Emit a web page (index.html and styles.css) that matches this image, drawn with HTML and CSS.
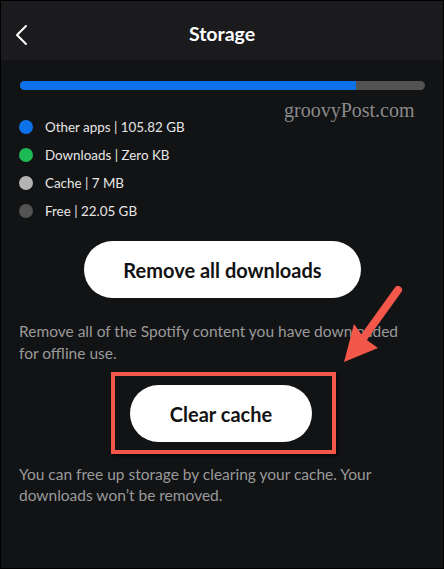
FILE: index.html
```html
<!DOCTYPE html>
<html>

<head>
    <meta charset="UTF-8">
    <meta name="viewport" content="width=device-width, initial-scale=1.0" />
    <title>Storage</title>
    <link rel="stylesheet" href="styles.css">
</head>

<body>
    <div class="screen">
        <header class="topbar">
            <svg class="back" width="14" height="22" viewBox="0 0 14 22">
                <polyline points="11,2 2,11 11,20" fill="none" stroke="#fff" stroke-width="2" stroke-linecap="round" stroke-linejoin="round" />
            </svg>
            <h1>Storage</h1>
        </header>

        <main class="content">
            <div class="bar">
                <div class="bar-used" style="width: 83%"></div>
            </div>

            <div class="watermark">groovyPost.com</div>

            <ul class="legend">
                <li><span class="dot blue"></span>Other apps | 105.82 GB</li>
                <li><span class="dot green"></span>Downloads | Zero KB</li>
                <li><span class="dot light"></span>Cache | 7 MB</li>
                <li><span class="dot dark"></span>Free | 22.05 GB</li>
            </ul>

            <button class="pill wide">Remove all downloads</button>
            <p class="note first">Remove all of the Spotify content you have downloaded for offline use.</p>

            <div class="highlight">
                <button class="pill">Clear cache</button>
            </div>
            <p class="note second">You can free up storage by clearing your cache. Your downloads won’t be removed.</p>

            <svg class="arrow" width="80" height="100" viewBox="0 0 80 100">
                <line x1="64" y1="8" x2="28" y2="58" stroke="#f2574a" stroke-width="8" stroke-linecap="round" />
                <polygon points="10,80 20,42 30,56 44,66" fill="#f2574a" />
            </svg>
        </main>
    </div>
</body>

</html>
```

FILE: styles.css
```css
* {
    box-sizing: border-box;
}

body {
    margin: 0;
    background: #000;
    font-family: Lato, "Open Sans", sans-serif;
}

.screen {
    width: 444px;
    height: 569px;
    border: 1px solid #000;
    background-color: #121315;
    overflow: hidden;
}

.topbar {
    height: 59px;
    background-color: #1b1b1d;
    display: flex;
    align-items: center;
    justify-content: center;
    position: relative;
}

.topbar h1 {
    margin: 0;
    margin-top: 6px;
    color: #fff;
    font-size: 19.5px;
    font-weight: 700;
}

.back {
    position: absolute;
    left: 14px;
    top: 23px;
}

.content {
    position: relative;
    padding: 0 20px 0 17px;
    display: flex;
    flex-direction: column;
}

.bar {
    margin: 21px -2px 0 2px;
    height: 9px;
    border-radius: 5px;
    background-color: #535353;
    overflow: hidden;
}

.bar-used {
    height: 100%;
    background-color: #0d72ea;
}

.watermark {
    position: absolute;
    left: 283px;
    top: 39px;
    color: #8a8a8a;
    font-family: "Liberation Serif", serif;
    font-size: 20px;
}

.legend {
    list-style-type: none;
    margin: 23px 0 0 0;
    padding: 0;
}

.legend li {
    height: 28px;
    display: flex;
    align-items: center;
    color: #e6e6e6;
    font-size: 13.4px;
}

.dot {
    width: 14px;
    height: 14px;
    border-radius: 50%;
    margin-right: 12px;
    margin-left: 1px;
}

.dot.blue {
    background-color: #0d72ea;
}

.dot.green {
    background-color: #1db954;
}

.dot.light {
    background-color: #b3b3b3;
}

.dot.dark {
    background-color: #535353;
}

.pill {
    align-self: center;
    height: 57px;
    border: none;
    border-radius: 29px;
    background: #fff;
    color: #121212;
    font-family: inherit;
    font-size: 20px;
    font-weight: 700;
    width: 182px;
}

.pill.wide {
    margin-top: 16px;
    width: 277px;
    margin-left: 4px;
}

.note {
    margin: 0 14px 0 0;
    color: #9a9a9a;
    font-size: 15.5px;
    line-height: 22px;
    padding-left: 1px;
}

.note.first {
    margin-top: 22px;
}

.note.second {
    margin-top: 10px;
    line-height: 21px;
}

.highlight {
    align-self: center;
    margin-top: 8px;
    margin-left: 6px;
    border: 4px solid #f2574a;
    padding: 9px 20px 8px 15px;
    box-shadow: 2px 2px 3px rgba(0, 0, 0, .6);
}

.highlight .pill {
    display: block;
}

.arrow {
    position: absolute;
    left: 333px;
    top: 222px;
}
```
